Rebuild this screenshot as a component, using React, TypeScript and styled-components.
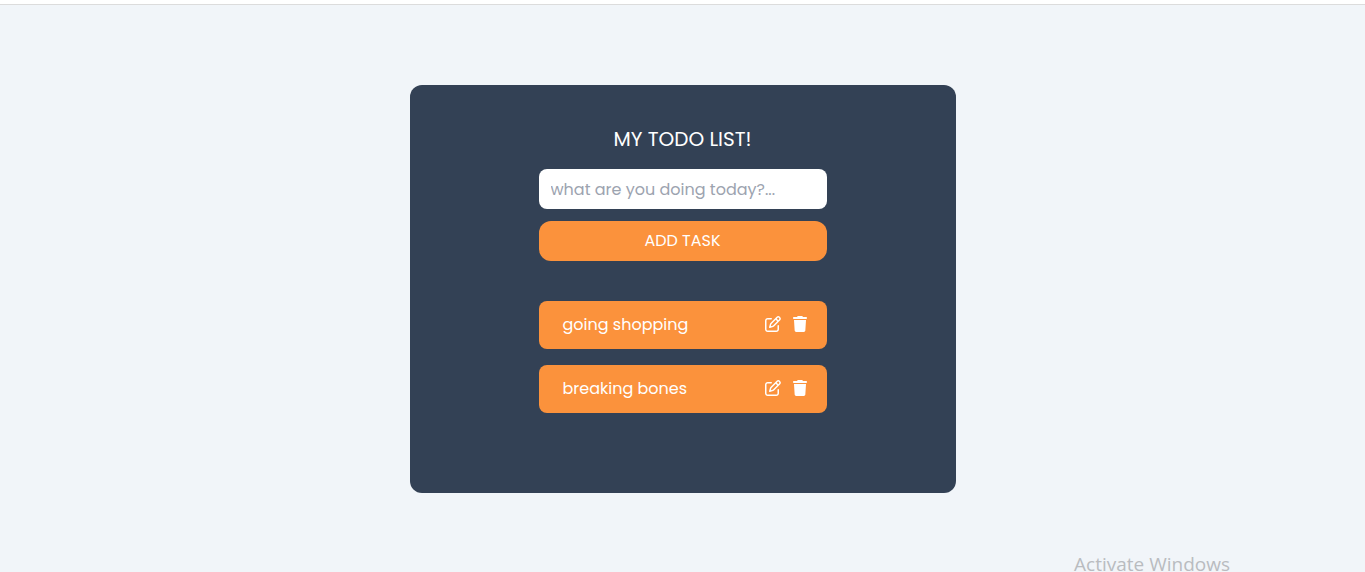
import React, { useState } from 'react';
import styled, { createGlobalStyle } from 'styled-components';
import { FaRegPenToSquare, FaTrash } from 'react-icons/fa6';

const GlobalStyle = createGlobalStyle`
  *, *::before, *::after { box-sizing: border-box; }
  body {
    margin: 0;
    background: #f1f5f9;
    font-family: Poppins, Inter, sans-serif;
    font-size: 16px;
    line-height: 24px;
  }
`;

const Page = styled.div`
  position: relative;
  min-height: 100vh;
`;

const TopStrip = styled.header`
  height: 5px;
  background: #ffffff;
  border-bottom: 1px solid #dcdcdc;
`;

const Card = styled.main`
  display: flex;
  flex-direction: column;
  align-items: center;
  width: 40%;
  min-width: 320px;
  margin: 80px auto 0;
  padding: 40px 16px 80px;
  border-radius: 12px;
  background: #334155;
  color: #ffffff;
`;

const Title = styled.h1`
  margin: 0 0 16px;
  font-size: 20px;
  font-weight: 400;
  line-height: 28px;
`;

const TaskForm = styled.form`
  display: flex;
  flex-direction: column;
  gap: 12px;
  width: 288px;
`;

const TaskInput = styled.input`
  width: 100%;
  height: 40px;
  padding: 0 12px;
  border: 0;
  border-radius: 8px;
  background: #ffffff;
  color: #334155;
  font: inherit;
  &::placeholder { color: #9ca3af; opacity: 1; }
`;

const AddButton = styled.button`
  height: 40px;
  padding: 0;
  border: 0;
  border-radius: 12px;
  background: #fb923c;
  color: #ffffff;
  font: inherit;
  cursor: pointer;
`;

const TaskList = styled.ul`
  display: flex;
  flex-direction: column;
  gap: 16px;
  width: 288px;
  margin: 40px 0 0;
  padding: 0;
  list-style: none;
`;

const TaskRow = styled.li`
  display: flex;
  align-items: center;
  justify-content: space-between;
  min-height: 48px;
  padding: 0 19px 0 24px;
  border-radius: 8px;
  background: #fb923c;
`;

const Actions = styled.div`
  display: flex;
  gap: 11px;
  padding-bottom: 2px;
`;

const IconButton = styled.button`
  display: flex;
  padding: 0;
  border: 0;
  background: none;
  color: inherit;
  font-size: 16px;
  cursor: pointer;
`;

const Watermark = styled.div`
  position: absolute;
  right: 135px;
  bottom: 0;
  color: #b9bcc0;
  font-family: "Segoe UI", "Open Sans", sans-serif;
  font-size: 19px;
  line-height: 16px;
`;

export default function App() {
  const [tasks, setTasks] = useState(['going shopping', 'breaking bones']);
  const [draft, setDraft] = useState('');

  const addTask = (event: React.FormEvent) => {
    event.preventDefault();
    if (!draft.trim()) return;
    setTasks([...tasks, draft.trim()]);
    setDraft('');
  };

  const removeTask = (index: number) => setTasks(tasks.filter((_, i) => i !== index));

  const editTask = (index: number) => {
    setDraft(tasks[index]);
    removeTask(index);
  };

  return (
    <Page>
      <GlobalStyle />
      <TopStrip />
      <Card>
        <Title>MY TODO LIST!</Title>
        <TaskForm onSubmit={addTask}>
          <TaskInput
            type="text"
            aria-label="New task"
            placeholder="what are you doing today?..."
            value={draft}
            onChange={(event) => setDraft(event.target.value)}
          />
          <AddButton type="submit">ADD TASK</AddButton>
        </TaskForm>
        <TaskList>
          {tasks.map((task, index) => (
            <TaskRow key={task + index}>
              <span>{task}</span>
              <Actions>
                <IconButton type="button" aria-label={`Edit ${task}`} onClick={() => editTask(index)}>
                  <FaRegPenToSquare />
                </IconButton>
                <IconButton type="button" aria-label={`Delete ${task}`} onClick={() => removeTask(index)}>
                  <FaTrash />
                </IconButton>
              </Actions>
            </TaskRow>
          ))}
        </TaskList>
      </Card>
      <Watermark>Activate Windows</Watermark>
    </Page>
  );
}
